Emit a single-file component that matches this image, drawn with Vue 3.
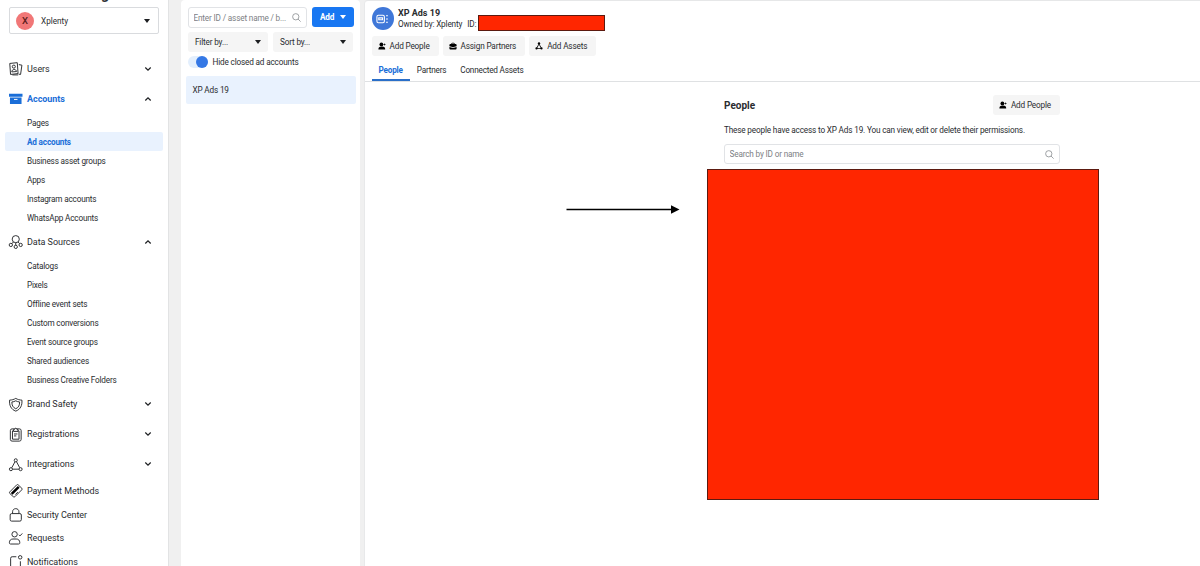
<script setup>
import { ref } from 'vue'

const activeItem = ref('Ad accounts')
const hideClosed = ref(true)
const search = ref('')
const peopleSearch = ref('')

const sections = ref([
	{ name: 'Users', icon: 'users', open: false },
	{
		name: 'Accounts',
		icon: 'accounts',
		open: true,
		active: true,
		items: [
			'Pages',
			'Ad accounts',
			'Business asset groups',
			'Apps',
			'Instagram accounts',
			'WhatsApp Accounts'
		]
	},
	{
		name: 'Data Sources',
		icon: 'data',
		open: true,
		items: [
			'Catalogs',
			'Pixels',
			'Offline event sets',
			'Custom conversions',
			'Event source groups',
			'Shared audiences',
			'Business Creative Folders'
		]
	},
	{ name: 'Brand Safety', icon: 'shield', open: false },
	{ name: 'Registrations', icon: 'clipboard', open: false },
	{ name: 'Integrations', icon: 'nodes', open: false }
])

const links = [
	{ name: 'Payment Methods', icon: 'card' },
	{ name: 'Security Center', icon: 'lock' },
	{ name: 'Requests', icon: 'requests' },
	{ name: 'Notifications', icon: 'bell' }
]

// line icons, 14x14 grid
const icons = {
	users:
		'<path d="M.8 1.5L8.6.7l.8 11.3-7.8.9zM10.200 2.700l3.200.6-1.400 9.600-2-.3M3.500 13.400h6"/><circle cx="5" cy="4.800" r="1.600"/><path d="M2.900 10.300c0-3.200 4.500-3.500 4.900-.4z"/>',
	accounts:
		'<path class="solid" d="M0 1.700h14v3.200H0zM1 5.800h12v6.700H1z"/><path stroke="#fff" d="M5.200 7.700h3.600"/>',
	data:
		'<circle cx="7" cy="4.300" r="3.700"/><circle cx="1.900" cy="10.300" r="1.700"/><circle cx="12.100" cy="10.300" r="1.700"/><circle cx="7" cy="12.300" r="1.700"/><path d="M4.600 7.200L3 9M9.400 7.200L11 9M7 8v2.600"/>',
	shield:
		'<path d="M7 .4c2 1.200 4 1.700 6.400 1.800C13.800 7.600 12 11.800 7 13.600 2 11.800.2 7.600.6 2.200 3 2.100 5 1.600 7 .4z"/><path d="M7 2.900c1.300.8 2.600 1.100 4 1.200.1 3.400-1 5.700-4 7.100-3-1.400-4.100-3.700-4-7.100 1.400-.1 2.700-.4 4-1.200z"/>',
	clipboard:
		'<rect x="1.400" y=".9" width="11.200" height="12.700" rx="1.800"/><path d="M3.600 3h6.800v8.600H3.600z"/><path fill="#fff" d="M4.700 3.500V1.500h1.100c.2-1.700 2.200-1.700 2.400 0h1.100v2z"/><path d="M5.200 6.200h3.600M5.200 8.200h2.400"/>',
	nodes:
		'<circle cx="7" cy="2.400" r="1.600"/><circle cx="2" cy="11.600" r="1.600"/><circle cx="12" cy="11.600" r="1.600"/><path d="M6.200 3.900L2.900 10.100M7.800 3.900l3.300 6.200M3.700 11.600h6.600"/>',
	card:
		'<path d="M8 .9q.8-.7 1.500 0l3.800 3.500q.7.800 0 1.600l-7.200 7.200q-.8.700-1.600 0L.8 9.800q-.7-.8 0-1.600z"/><path stroke="#000" stroke-width="2.600" d="M10.100 2.900L2.800 10.300"/><path d="M6.600 11L9.200 8.400"/>',
	lock:
		'<rect x="1.200" y="5.800" width="11.600" height="7.800" rx="1.500"/><path d="M3.700 5.800V3.900c0-4.300 6.600-4.300 6.600 0v1.900"/>',
	requests:
		'<circle cx="5.800" cy="3.400" r="2.800"/><path d="M.4 12.200c0-2.600 1.500-3.900 3.700-3.900h3.400c2.200 0 3.700 1.300 3.700 3.900 0 1-.5 1.300-1.300 1.300H1.700c-.8 0-1.300-.3-1.300-1.300zM10.200 3.900l1.200 1.200 2.400-2.600"/>',
	bell:
		'<path d="M7.600 1.800H3.300q-1.600 0-1.600 1.600v8.500q0 1.600 1.600 1.600h6.900q1.600 0 1.600-1.600V6.500"/><circle cx="11.600" cy="2.400" r="1.800"/>'
}

const actions = [
	{ name: 'Add People', icon: 'person' },
	{ name: 'Assign Partners', icon: 'case' },
	{ name: 'Add Assets', icon: 'assets' }
]

// small button icons, 8x8 grid
const smallIcons = {
	person:
		'<circle cx="3.400" cy="2.400" r="1.900"/><path d="M.4 7.600c0-2.300 1-3 3-3h.8c2 0 3 .7 3 3zM6.200 1.400h.6v.7h.7v.6h-.7v.7h-.6v-.7h-.7v-.6h.7z"/>',
	case:
		'<path d="M2.200 2c0-1.600 3.600-1.600 3.600 0h.8q1 0 1 1v1.300L4.700 5H3.300L.4 4.300V3q0-1 1-1zm.8 0h2c0-.6-2-.6-2 0zM.4 5l2.700.7h1.800L7.600 5v1.400q0 1-1 1H1.400q-1 0-1-1z"/>',
	assets:
		'<circle cx="4" cy="1.500" r="1.200"/><circle cx="1.500" cy="6.400" r="1.100"/><circle cx="6.500" cy="6.400" r="1.100"/><path d="M3.400 2.200l.7.4-1.900 3.500-.7-.4zM4.600 2.200l-.7.4 1.900 3.500.7-.4zM2 6.100h4v.7H2z"/>'
}

const tabs = ['People', 'Partners', 'Connected Assets']
const activeTab = ref('People')
</script>

<template>
	<div class="page">
		<aside class="sidebar">
			<div class="title">Business Manager</div>
			<div class="business">
				<span class="avatar">X</span>
				<span class="business-name">Xplenty</span>
				<i class="caret"></i>
			</div>
			<nav>
				<div v-for="section in sections" :key="section.name">
					<div
						class="nav-head"
						:class="{ active: section.active, opened: section.open }"
						@click="section.open = !section.open"
					>
						<svg class="nav-icon" viewBox="0 0 14 14" v-html="icons[section.icon]"></svg>
						<span>{{ section.name }}</span>
						<svg class="chevron" :class="{ up: section.open }" viewBox="0 0 8 6">
							<path d="M1.3 1.5L4 4.2l2.7-2.7" />
						</svg>
					</div>
					<template v-if="section.open">
						<div
							v-for="item in section.items"
							:key="item"
							class="nav-item"
							:class="{ selected: item === activeItem }"
							@click="activeItem = item"
						>
							{{ item }}
						</div>
					</template>
				</div>
				<div v-for="link in links" :key="link.name" class="nav-head nav-link">
					<svg class="nav-icon" viewBox="0 0 14 14" v-html="icons[link.icon]"></svg>
					<span>{{ link.name }}</span>
				</div>
			</nav>
		</aside>

		<section class="list">
			<div class="row search-row">
				<div class="search">
					<input v-model="search" type="text" placeholder="Enter ID / asset name / b..." />
					<svg class="glass" viewBox="0 0 10 10">
						<circle cx="4.2" cy="4.2" r="3.5" />
						<path d="M6.7 6.7L9.6 9.6" />
					</svg>
				</div>
				<button class="add">Add <i class="caret"></i></button>
			</div>
			<div class="row filter-row">
				<button class="filter">Filter by... <i class="caret"></i></button>
				<button class="filter">Sort by... <i class="caret"></i></button>
			</div>
			<div class="toggle-row" @click="hideClosed = !hideClosed">
				<span class="toggle" :class="{ on: hideClosed }"></span>
				<span>Hide closed ad accounts</span>
			</div>
			<div class="account">XP Ads 19</div>
		</section>

		<main class="main">
			<header>
				<div class="account-info">
					<span class="account-logo">
						<svg viewBox="0 0 14 10">
							<rect x="1" y="1" width="8" height="8" rx="1.5" />
							<path d="M3 3.800h4v2H3zM10.800 1.500h2M10.800 5h2M10.800 8.500h2" />
						</svg>
					</span>
					<div class="account-text">
						<div class="account-name">XP Ads 19</div>
						<div class="owner">
							<span>Owned by: Xplenty</span><span class="id">ID:</span>
						</div>
					</div>
					<div class="id-block"></div>
				</div>
				<div class="actions">
					<button v-for="action in actions" :key="action.name" class="action">
						<svg viewBox="0 0 8 8" v-html="smallIcons[action.icon]"></svg>
						<span>{{ action.name }}</span>
					</button>
				</div>
				<div class="tabs">
					<div
						v-for="tab in tabs"
						:key="tab"
						class="tab"
						:class="{ current: tab === activeTab }"
						@click="activeTab = tab"
					>
						{{ tab }}
					</div>
				</div>
			</header>
			<div class="people">
				<div class="people-head">
					<h2>People</h2>
					<button class="action">
						<svg viewBox="0 0 8 8" v-html="smallIcons.person"></svg>
						<span>Add People</span>
					</button>
				</div>
				<p>These people have access to XP Ads 19. You can view, edit or delete their permissions.</p>
				<div class="search people-search">
					<input v-model="peopleSearch" type="text" placeholder="Search by ID or name" />
					<svg class="glass" viewBox="0 0 10 10">
						<circle cx="4.2" cy="4.2" r="3.5" />
						<path d="M6.7 6.7L9.6 9.6" />
					</svg>
				</div>
				<div class="people-block"></div>
			</div>
			<svg class="arrow" viewBox="0 0 114 10">
				<path d="M.5 5.500H106" stroke="#000" stroke-width="1.700" />
				<path d="M105 1.300L113.500 5.500 105 9.700z" />
			</svg>
		</main>
	</div>
</template>

<style>
body {
	margin: 0;
	overflow: hidden;
}
</style>

<style scoped>
.page {
	display: flex;
	width: 1200px;
	height: 566px;
	overflow: hidden;
	background: #f0f0f0;
	color: #2a2c2f;
	font-family: Roboto, 'Liberation Sans', sans-serif;
	font-size: 8.2px;
	letter-spacing: -0.16px;
}
.page * {
	box-sizing: border-box;
}
button,
input {
	font: inherit;
	letter-spacing: inherit;
	color: inherit;
	border: 0;
	padding: 0;
	outline: none;
}
svg {
	display: block;
	flex: none;
}
.caret {
	flex: none;
	border: 3px solid transparent;
	border-top: 4px solid #1c1e21;
	border-bottom: 0;
}

/* sidebar */
.sidebar {
	width: 169px;
	height: 566px;
	flex: none;
	overflow: hidden;
	background: #fff;
	border-right: 1px solid #e2e3e4;
}
.title {
	height: 7px;
	padding-left: 7px;
	display: flex;
	align-items: flex-end;
	font-size: 14px;
	line-height: 16px;
	font-weight: 700;
	white-space: nowrap;
	padding-bottom: 5px;
}
.business {
	display: flex;
	align-items: center;
	width: 150px;
	height: 27px;
	margin: 0 0 20px 9px;
	padding: 0 8px 0 6px;
	border: 1px solid #d9dbde;
	border-radius: 2px;
}
.avatar {
	width: 18px;
	height: 18px;
	margin-right: 7px;
	border-radius: 50%;
	background: #f17777;
	color: #5c1c1c;
	font-size: 9.5px;
	line-height: 18px;
	text-align: center;
	font-weight: 500;
}
.business-name {
	flex: 1;
	letter-spacing: 0;
}
.nav-head {
	display: flex;
	align-items: center;
	height: 30px;
	padding: 0 16.5px 0 9px;
	font-size: 9px;
	letter-spacing: -0.05px;
}
.nav-head span {
	flex: 1;
	margin-left: 4.5px;
}
.nav-head.opened {
	height: 29.4px;
}
.nav-head.active {
	height: 29px;
	color: #1a6ed8;
	font-weight: 700;
}
.nav-link {
	height: 23.5px;
}
.nav-icon {
	width: 13.5px;
	height: 13.5px;
	fill: none;
	stroke: #2b2d30;
	stroke-width: 1;
	stroke-linejoin: round;
	overflow: visible;
}
.nav-icon :deep(.solid) {
	fill: #1a6ed8;
	stroke: none;
}
.chevron {
	width: 8px;
	height: 6px;
	fill: none;
	stroke: #1c1e21;
	stroke-width: 1.2;
}
.chevron.up {
	transform: rotate(180deg);
}
.nav-item {
	height: 19px;
	margin: 0 5px;
	padding-left: 22px;
	line-height: 20.5px;
	letter-spacing: -0.18px;
	border-radius: 2px;
}
.nav-item.selected {
	background: #e9f2fe;
	color: #1a6ed8;
	font-weight: 700;
}

/* account list */
.list {
	width: 179px;
	height: 566px;
	flex: none;
	margin-left: 12px;
	padding: 7px 4px 0 5px;
	background: #fff;
	border-radius: 4px 4px 0 0;
}
.row {
	display: flex;
	padding-left: 2px;
}
.search-row {
	gap: 5px;
}
.search {
	display: flex;
	align-items: center;
	width: 119px;
	height: 21px;
	padding: 0 5px 0 4.5px;
	border: 1px solid #e1e3e6;
	border-radius: 3px;
}
.search input {
	flex: 1;
	min-width: 0;
	background: none;
}
.search input::placeholder {
	color: #7d8084;
}
.glass {
	width: 9px;
	height: 9px;
	fill: none;
	stroke: #8a8d91;
	stroke-width: 0.9;
}
.add {
	display: flex;
	align-items: center;
	justify-content: center;
	gap: 6px;
	width: 42px;
	height: 20px;
	border-radius: 3px;
	background: #1877f2;
	color: #fff;
	font-weight: 700;
}
.add .caret {
	border-top-color: #fff;
}
.filter-row {
	gap: 5px;
	margin-top: 4px;
}
.filter {
	display: flex;
	align-items: center;
	justify-content: space-between;
	width: 80px;
	height: 20px;
	padding: 0 7px 0 7px;
	background: #f5f5f5;
	border-radius: 3px;
}
.toggle-row {
	display: flex;
	align-items: center;
	height: 20px;
	padding-left: 2px;
}
.toggle {
	display: flex;
	width: 20px;
	height: 12px;
	margin-right: 4.5px;
	border-radius: 6px;
	background: #dddfe2;
}
.toggle::before {
	content: '';
	width: 12px;
	height: 12px;
	border-radius: 50%;
	background: #8d949e;
}
.toggle.on {
	justify-content: flex-end;
	background: #e3effd;
}
.toggle.on::before {
	background: #3578e5;
}
.account {
	height: 28px;
	margin-top: 4px;
	padding-left: 6.5px;
	line-height: 28px;
	background: #e9f2fe;
	border-radius: 2px;
}

/* content */
.main {
	position: relative;
	flex: 1;
	margin-left: 4px;
	background: #fff;
	border-top: 1px solid #e6e7e8;
	border-left: 1px solid #e8e9ea;
	border-radius: 4px 0 0 0;
}
header {
	height: 81px;
	padding: 6px 0 0 6.5px;
	border-bottom: 1px solid #dfe1e3;
}
.account-info {
	display: flex;
	height: 24px;
}
.account-logo {
	display: flex;
	align-items: center;
	justify-content: center;
	width: 22.5px;
	height: 23px;
	border-radius: 50%;
	background: #3f77d8;
}
.account-logo svg {
	width: 13px;
	height: 10px;
	fill: none;
	stroke: #fff;
	stroke-width: 1.2;
}
.account-text {
	width: 80px;
	margin-left: 4px;
	white-space: nowrap;
}
.account-name {
	height: 12px;
	line-height: 12px;
	font-size: 9px;
	font-weight: 700;
	letter-spacing: 0;
}
.owner {
	line-height: 11px;
}
.owner .id {
	margin-left: 5px;
}
.id-block {
	width: 127px;
	height: 16px;
	margin-top: 8px;
	background: #ff2600;
	border: 1px solid #5c1a10;
}
.actions {
	display: flex;
	gap: 4px;
	margin-top: 5px;
}
.action {
	display: flex;
	align-items: center;
	height: 20px;
	padding: 0 9px 0 6px;
	background: #f5f5f5;
	border-radius: 3px;
	white-space: nowrap;
}
.action svg {
	width: 8px;
	height: 8px;
	margin-right: 4px;
}
.tabs {
	display: flex;
	height: 25px;
}
.tab {
	height: 25px;
	padding: 0 7px;
	line-height: 28px;
	letter-spacing: -0.2px;
}
.tab.current {
	color: #1a6ed8;
	font-weight: 700;
	border-bottom: 2px solid #2a6fc9;
}
.people {
	width: 336px;
	margin: 13px 0 0 359px;
}
.people-head {
	display: flex;
	align-items: center;
	justify-content: space-between;
	height: 20px;
}
h2 {
	margin: 0;
	font-size: 10px;
	font-weight: 700;
	letter-spacing: 0;
}
p {
	margin: 9px 0 0;
	line-height: 12px;
	white-space: nowrap;
}
.people-search {
	width: 336px;
	height: 20px;
	margin-top: 8px;
}
.people-block {
	width: 392px;
	height: 331px;
	margin: 5px 0 0 -17px;
	background: #ff2600;
	border: 1px solid #5c1a10;
}
/* pointer over the empty area */
.arrow {
	position: absolute;
	left: 201px;
	top: 203px;
	width: 114px;
	height: 10px;
}
</style>
